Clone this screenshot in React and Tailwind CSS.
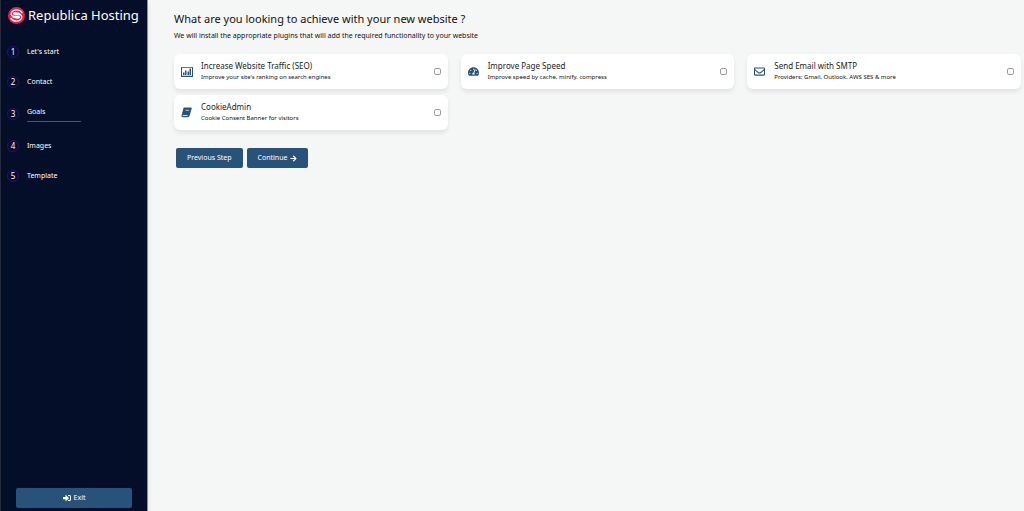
import { useState } from 'react'
import { FaArrowRight, FaRegEnvelope, FaSignInAlt, FaTachometerAlt } from 'react-icons/fa'

const STEPS = ["Let's start", 'Contact', 'Goals', 'Images', 'Template']

function ChartIcon({ className }) {
  return (
    <svg viewBox="0 0 24 20" className={className} fill="currentColor" aria-hidden>
      <path d="M1 0h22a1 1 0 0 1 1 1v18a1 1 0 0 1-1 1H1a1 1 0 0 1-1-1V1a1 1 0 0 1 1-1zm1 1.600v16h20v-16z" />
      <path d="M4 11h3v5H4zM8 7h3v9H8zM13 9h3v7h-3zM17 3h3v13h-3z" />
    </svg>
  )
}

function BookIcon({ className }) {
  return (
    <svg viewBox="0 0 20 20" className={className} aria-hidden>
      <path
        d="M6.200 1h11.600c1.300 0 2 1 1.600 2.200L15.600 16c-.5 1.600-1.600 2.500-3.200 2.500H3.200C1.600 18.500.4 17.200 1 15.500L4.200 3C4.500 1.700 5 1 6.200 1z"
        fill="currentColor"
      />
      <path d="M8 6h7" stroke="#fff" strokeWidth="1.200" />
      <path d="M3 15.500h9" stroke="#fff" strokeWidth="1.500" fill="none" />
    </svg>
  )
}

const GOALS = [
  {
    id: 'seo',
    title: 'Increase Website Traffic (SEO)',
    text: "Improve your site's ranking on search engines",
    icon: <ChartIcon className="h-[10px] w-3" />,
  },
  {
    id: 'speed',
    title: 'Improve Page Speed',
    text: 'Improve speed by cache, minify, compress',
    icon: <FaTachometerAlt className="h-[11px] w-[11px]" />,
  },
  {
    id: 'smtp',
    title: 'Send Email with SMTP',
    text: 'Providers: Gmail, Outlook, AWS SES & more',
    icon: <FaRegEnvelope className="h-[11px] w-[11px]" />,
  },
  {
    id: 'cookie',
    title: 'CookieAdmin',
    text: 'Cookie Consent Banner for visitors',
    icon: <BookIcon className="h-[11px] w-[11px]" />,
  },
]

function Logo() {
  return (
    <svg viewBox="0 0 34 34" className="h-[17px] w-[17px] shrink-0" aria-hidden>
      <circle cx="17" cy="17" r="17" fill="#e8204f" />
      <g fill="none" stroke="#fff" strokeWidth="2.600" strokeLinecap="round">
        <path d="M28 11C23 4 11 4 7 11c-2 5 1 8 5 8h8c4 0 4 3 0 3-4 0-7 0-10-2" />
        <path d="M6 23c5 7 17 7 21 0 2-5-1-8-5-8h-8c-4 0-4-3 0-3 4 0 7 0 10 2" />
      </g>
    </svg>
  )
}

function Sidebar({ current }) {
  return (
    <aside className="flex w-[148px] shrink-0 flex-col border-x border-l-[#242a3c] border-r-[#8a8f99] bg-[#050e28] text-white shadow-md">
      <div className="flex h-[31px] items-center gap-[3px] pl-[7px] whitespace-nowrap">
        <Logo />
        <span className="text-[13px] leading-none">Republica Hosting</span>
      </div>
      <nav className="mt-[14px] flex-1">
        <ol className="flex flex-col gap-[17px] pl-[6px]">
          {STEPS.map((step, i) => (
            <li key={step} className="flex items-center gap-2">
              <span className="flex h-3 w-3 items-center justify-center rounded-full border border-[#2a0f78] text-[8px] leading-none">
                {i + 1}
              </span>
              <a
                href={`#step-${i + 1}`}
                aria-current={step === current ? 'step' : undefined}
                className={
                  step === current
                    ? 'w-[54px] border-b border-[#2c5f8e] pb-[3px] text-[7px] leading-[13px]'
                    : 'text-[7px] leading-[13px]'
                }
              >
                {step}
              </a>
            </li>
          ))}
        </ol>
      </nav>
      <div className="px-[15px] pb-[3px]">
        <button
          type="button"
          className="flex h-5 w-full items-center justify-center gap-[3px] rounded-xs bg-[#29527a] text-[7px] text-white"
        >
          <FaSignInAlt className="h-2 w-2" aria-hidden />
          Exit
        </button>
      </div>
    </aside>
  )
}

function GoalCard({ goal, checked, onChange }) {
  return (
    <label
      htmlFor={goal.id}
      className="flex h-[35px] items-center rounded-md bg-white pr-[7px] pl-[7px] shadow-[0_3px_4px_rgba(0,0,0,0.08)]"
    >
      <span className="flex w-5 shrink-0 items-center text-[#29527a]">{goal.icon}</span>
      <span className="flex flex-1 flex-col pb-[2px]">
        <span className="text-[8px] leading-3 text-[#222]">{goal.title}</span>
        <span className="text-[6px] leading-[10px] text-[#111]">{goal.text}</span>
      </span>
      <input
        id={goal.id}
        type="checkbox"
        checked={checked}
        onChange={onChange}
        className="h-[7px] w-[7px] appearance-none rounded-[2px] border border-[#9c9ca2] bg-white checked:bg-[#29527a]"
      />
    </label>
  )
}

export default function App() {
  const [selected, setSelected] = useState([])

  function toggle(id) {
    setSelected((prev) => (prev.includes(id) ? prev.filter((x) => x !== id) : [...prev, id]))
  }

  const buttonClass =
    'flex h-5 items-center gap-[3px] rounded-xs bg-[#29527a] px-[11px] text-[7px] text-white'

  return (
    <div className="flex min-h-screen bg-[#f5f7f7] font-['Noto_Sans','Open_Sans',sans-serif]">
      <Sidebar current="Goals" />
      <main className="flex-1 pt-[10px] pr-[3px] pl-[26px]">
        <h1 className="text-[11px] leading-[18px] text-[#111]">
          What are you looking to achieve with your new website ?
        </h1>
        <p className="mt-[2px] text-[7px] leading-[11px] text-[#111]">
          We will install the appropriate plugins that will add the required functionality to your website
        </p>
        <div className="mt-[13px] grid grid-cols-3 gap-x-[13px] gap-y-[6px]">
          {GOALS.map((goal) => (
            <GoalCard
              key={goal.id}
              goal={goal}
              checked={selected.includes(goal.id)}
              onChange={() => toggle(goal.id)}
            />
          ))}
        </div>
        <div className="mt-[18px] flex gap-1 pl-[2px]">
          <button type="button" className={buttonClass}>
            Previous Step
          </button>
          <button type="button" className={buttonClass}>
            Continue
            <FaArrowRight className="h-[7px] w-[7px]" aria-hidden />
          </button>
        </div>
      </main>
    </div>
  )
}
